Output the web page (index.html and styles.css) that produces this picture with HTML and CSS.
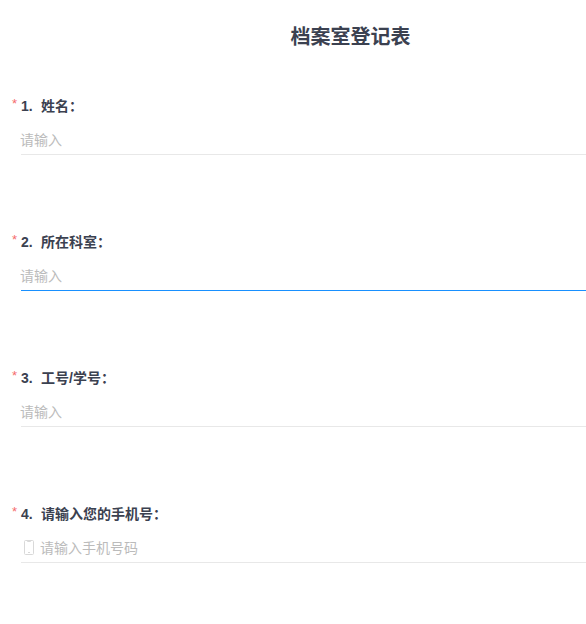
FILE: index.html
```html
<!DOCTYPE html>
<html lang="zh-CN">
<head>
    <meta charset="UTF-8">
    <meta name="viewport" content="width=device-width, initial-scale=1.0">
    <title>档案室登记表</title>
    <link rel="stylesheet" href="styles.css">
</head>
<body>
    <div class="container">
        <h1>档案室登记表</h1>

        <div class="field">
            <div class="field-label"><span class="required">*</span><span class="num">1.</span>姓名<span class="colon">：</span></div>
            <div class="input-row">
                <input class="text-input" type="text" placeholder="请输入">
            </div>
        </div>

        <div class="field">
            <div class="field-label"><span class="required">*</span><span class="num">2.</span>所在科室<span class="colon">：</span></div>
            <div class="input-row focused">
                <input class="text-input" type="text" placeholder="请输入">
            </div>
        </div>

        <div class="field">
            <div class="field-label"><span class="required">*</span><span class="num">3.</span>工号/学号<span class="colon">：</span></div>
            <div class="input-row">
                <input class="text-input" type="text" placeholder="请输入">
            </div>
        </div>

        <div class="field">
            <div class="field-label"><span class="required">*</span><span class="num">4.</span>请输入您的手机号<span class="colon">：</span></div>
            <div class="input-row">
                <svg class="phone-icon" width="12" height="15" viewBox="0 0 12 15" fill="none" stroke="#d9d9d9" stroke-width="1">
                    <rect x="1.5" y="0.5" width="9" height="14" rx="1"/>
                    <path d="M4.5 0.5v1h3v-1M5 12.5h2"/>
                </svg>
                <input class="text-input" type="text" placeholder="请输入手机号码">
            </div>
        </div>
    </div>
</body>
</html>
```

FILE: styles.css
```css
* {
    margin: 0;
    padding: 0;
    box-sizing: border-box;
    font-family: "Liberation Sans", "Noto Sans CJK SC", sans-serif;
}

html, body {
    height: 100%;
    overflow: hidden;
}

body {
    background: #fff;
    color: #3b4150;
}

.container {
    width: 100%;
    padding-left: 21px;
}

h1 {
    height: 74px;
    padding-top: 23px;
    padding-left: 94px;
    font-size: 20px;
    line-height: 28px;
    font-weight: 700;
    text-align: center;
}

.field {
    height: 136px;
    padding-top: 22px;
}

.field-label {
    position: relative;
    height: 18px;
    font-size: 14px;
    line-height: 18px;
    font-weight: 700;
}

.colon {
    font-family: "Noto Sans CJK TC", sans-serif;
}

.required {
    position: absolute;
    left: -9px;
    top: -1px;
    font-size: 13px;
    color: #f56c6c;
    font-weight: 400;
}

.num {
    display: inline-block;
    width: 20px;
}

.input-row {
    display: flex;
    align-items: center;
    height: 33px;
    margin-top: 8px;
    border-bottom: 1px solid #e8e8e8;
}

.input-row.focused {
    border-bottom: 1px solid #1890ff;
}

.phone-icon {
    flex: none;
    margin-top: 2px;
    margin-left: 2px;
    margin-right: 6px;
}

.text-input {
    flex: 1;
    min-width: 0;
    height: 32px;
    margin-left: -1px;
    padding-top: 3px;
    border: none;
    outline: none;
    background: transparent;
    font-size: 14px;
    color: #3b4150;
}

.text-input::placeholder {
    color: #bbbbbb;
    opacity: 1;
}
```
